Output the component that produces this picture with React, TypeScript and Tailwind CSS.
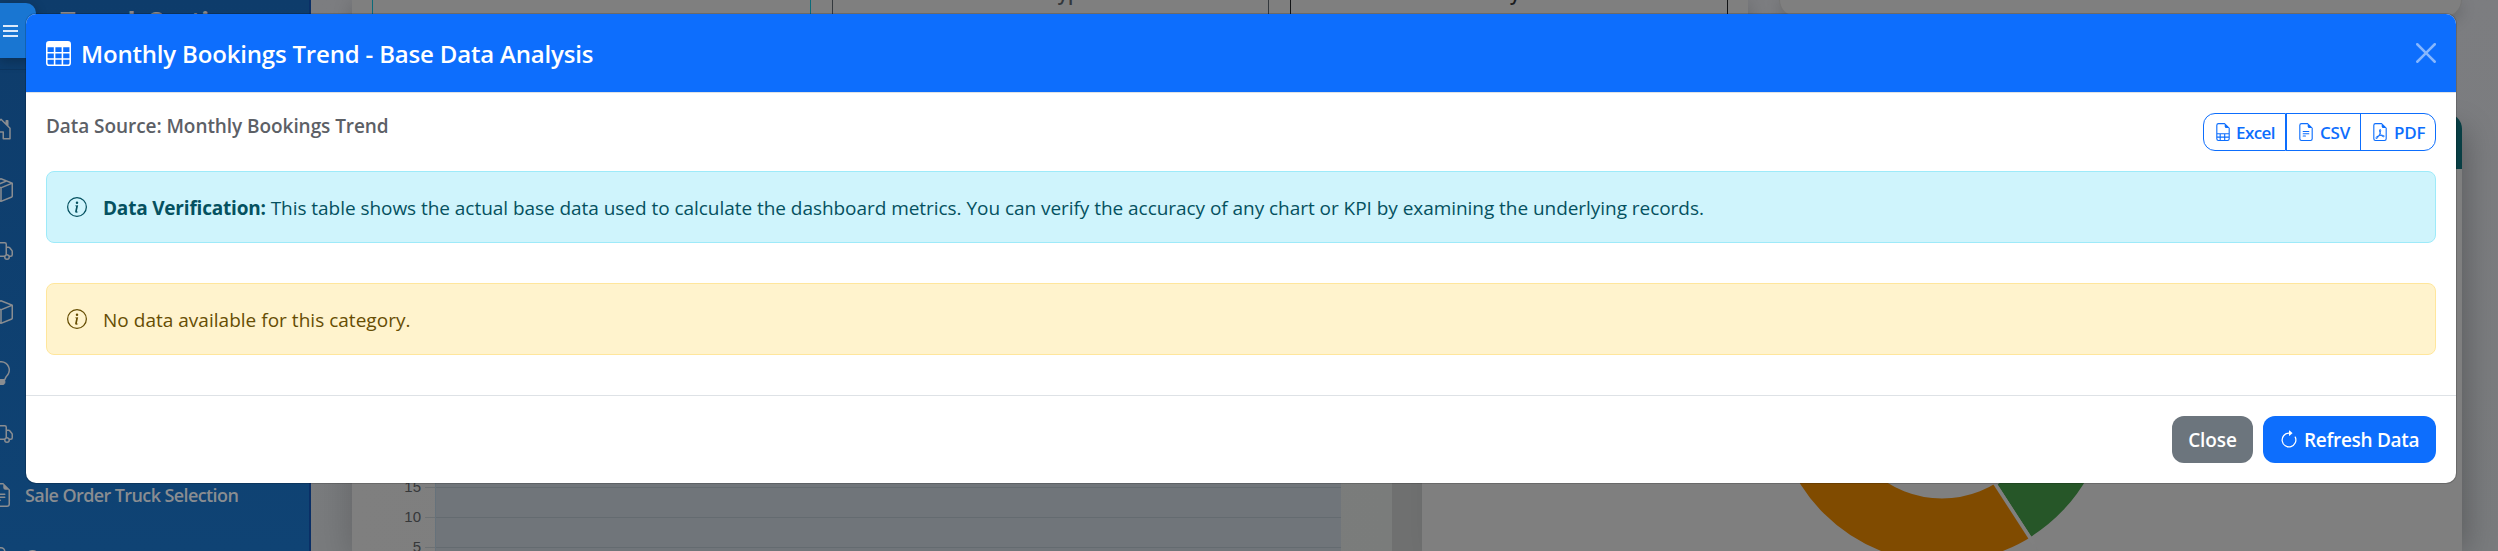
import React from "react";
import {
  BsArrowClockwise,
  BsBox,
  BsBoxSeam,
  BsFileEarmarkPdf,
  BsFileEarmarkSpreadsheet,
  BsFileEarmarkText,
  BsHouseDoor,
  BsInfoCircle,
  BsLightbulb,
  BsPerson,
  BsTable,
  BsTruck,
} from "react-icons/bs";

const menu = [
  { icon: BsHouseDoor, label: "" },
  { icon: BsBoxSeam, label: "" },
  { icon: BsTruck, label: "" },
  { icon: BsBox, label: "" },
  { icon: BsLightbulb, label: "" },
  { icon: BsTruck, label: "" },
  { icon: BsFileEarmarkText, label: "Sale Order Truck Selection" },
  { icon: BsPerson, label: "Customer" },
];

function Sidebar() {
  return (
    <aside className="relative flex h-full w-[311px] shrink-0 flex-col overflow-hidden border-r-2 border-[#0a2f66] bg-linear-to-b from-[#0e3c6b] to-[#0f4374] text-[#8a8d91]">
      <div className="h-[70px] shrink-0 border-b border-[#0c3560] pt-[2px] pl-[60px]">
        <div className="text-[27px] leading-[37px] font-bold tracking-[-0.8px] [word-spacing:7px] whitespace-nowrap text-[#87868a]">Trend Section</div>
      </div>
      <nav className="-ml-[11px] flex flex-col pt-[28px]">
        {menu.map(({ icon: Icon, label }, i) => (
          <div key={i} className="flex h-[61px] shrink-0 items-center gap-3">
            <Icon className="size-6 shrink-0" />
            {label && <span className="pt-[2px] text-[18px] font-semibold tracking-[-0.6px] whitespace-nowrap">{label}</span>}
          </div>
        ))}
      </nav>
      <div className="absolute top-[3px] left-0 flex h-[55px] w-9 flex-col gap-[3px] rounded-tr-[10px] bg-[#1976d2] pt-[22px] pl-[3px] shadow-[0_3px_12px_rgba(0,0,0,0.25)]">
        <div className="h-[2px] w-[15px] bg-[#dceafa]" />
        <div className="h-[2px] w-[15px] bg-[#dceafa]" />
        <div className="h-[2px] w-[15px] bg-[#dceafa]" />
      </div>
    </aside>
  );
}

function TopCards() {
  return (
    <div className="flex h-[113px] items-start">
      <div className="flex h-full w-[1396px] gap-[21px] rounded-b-2xl bg-[#7f7f7f] pl-5 shadow-[0_4px_20px_rgba(0,0,0,0.2)]">
        <div className="h-full w-[439px] border-x border-[#0a6b7a]" />
        <div className="h-full w-[437px] border-x border-[#33383d] pl-[214px]">
          <div className="-mt-[19px] text-[19px] leading-6 font-semibold text-[#33373b]">Type</div>
        </div>
        <div className="h-full w-[438px] border-x border-[#111315] pl-[183px]">
          <div className="-mt-[19px] text-[19px] leading-6 font-semibold text-[#1b1c1e]">Body</div>
        </div>
      </div>
      <div className="ml-[31px] h-[17px] w-[683px] rounded-b-[20px] border border-t-0 border-[#747474] bg-[#7f7f7f] shadow-[0_4px_16px_rgba(0,0,0,0.2)]" />
    </div>
  );
}

function LineChart() {
  return (
    <div className="flex h-full w-[1040px] flex-col justify-end bg-linear-to-r from-[#7f7f7f] to-[#7a7c7b]">
      <div className="flex h-[79px]">
        <div className="w-[69px] text-right font-['Liberation_Sans',sans-serif] text-[15px] leading-[30px] text-[#36383a]">
          <div>15</div>
          <div>10</div>
          <div>5</div>
        </div>
        <div className="ml-[4px] w-[10px]">
          <div className="h-[16px] border-b border-[#6d7173]" />
          <div className="h-[30px] border-b border-[#6d7173]" />
          <div className="h-[30px] border-b border-[#6d7173]" />
        </div>
        <div className="w-[906px] border-l border-[#66727b] bg-[#70757a]">
          <div className="h-[16px] border-b border-[#646b70]" />
          <div className="h-[30px] border-b border-[#646b70]" />
          <div className="h-[30px] border-b border-[#646b70]" />
        </div>
      </div>
    </div>
  );
}

function DonutChart() {
  return (
    <div className="flex h-full w-[1040px] flex-col rounded-t-[16px] bg-[#7f7f7f]">
      <div className="h-[56px] rounded-t-[16px] bg-[#083e44]" />
      <svg className="h-[382px] w-[1040px]" viewBox="1422 169 1040 382">
        <circle cx="1942" cy="395.5" r="135" fill="none" stroke="#804b00" strokeWidth="64" />
        <path d="M1942 395.5 L2046 564 L2140 564 L2140 395.5 Z" fill="#7f7f7f" />
        <path d="M1997.5 484.5 L2031.2 536.5 A167 167 0 0 0 2109 395.5 L2045 395.5 A103 103 0 0 1 1997.5 484.5 Z" fill="#265628" />
        <path d="M1990 476 L2034 544" stroke="#808080" strokeWidth="3.5" />
      </svg>
    </div>
  );
}

function ExportButton({ icon: Icon, children, className }: { icon: React.ElementType; children: string; className: string }) {
  return (
    <button className={"flex h-[38px] items-center border border-[#0d6efd] text-[17px] font-semibold text-[#0d6efd] " + className}>
      <Icon className="size-[18px] shrink-0" />
      <span className="pt-[2px]">{children}</span>
    </button>
  );
}

function Modal() {
  return (
    <section className="absolute top-[14px] left-[26px] flex h-[469px] w-[2430px] flex-col overflow-hidden rounded-[10px] bg-white shadow-[0_0_0_1px_rgba(0,0,0,0.17)]">
      <header className="flex h-[79px] shrink-0 items-center justify-between border-b border-[#dee2e6] bg-[#0d6efd] bg-clip-padding px-5 text-white">
        <div className="flex items-center gap-[10px]">
          <BsTable className="size-[25px]" />
          <h1 className="pt-px text-[24px] leading-[36px] font-semibold tracking-[-0.18px]">Monthly Bookings Trend - Base Data Analysis</h1>
        </div>
        <svg className="size-5 opacity-50" viewBox="0 0 16 16" fill="currentColor">
          <path d="M.293.293a1 1 0 0 1 1.414 0L8 6.586 14.293.293a1 1 0 1 1 1.414 1.414L9.414 8l6.293 6.293a1 1 0 0 1-1.414 1.414L8 9.414l-6.293 6.293a1 1 0 0 1-1.414-1.414L6.586 8 .293 1.707a1 1 0 0 1 0-1.414z" />
        </svg>
      </header>
      <div className="flex h-[302px] shrink-0 flex-col p-5">
        <div className="flex h-[38px] items-start justify-between">
          <h2 className="pt-px text-[19px] leading-6 font-semibold tracking-[-0.065px] text-[#5c6066]">Data Source: Monthly Bookings Trend</h2>
          <div className="flex">
            <ExportButton icon={BsFileEarmarkSpreadsheet} className="w-[83px] gap-[4px] rounded-l-[12px] pl-[10px] tracking-[-0.6px]">Excel</ExportButton>
            <ExportButton icon={BsFileEarmarkText} className="w-[75px] gap-[5px] pl-[10px] tracking-[-0.2px]">CSV</ExportButton>
            <ExportButton icon={BsFileEarmarkPdf} className="-ml-px w-[76px] gap-[5px] rounded-r-[12px] pl-[10px] tracking-[-0.2px]">PDF</ExportButton>
          </div>
        </div>
        <div className="mt-5 flex h-[72px] items-center gap-4 rounded-lg border border-[#9eeaf9] bg-[#cff4fc] px-5 text-[#055160]">
          <BsInfoCircle className="size-5 shrink-0" />
          <p className="pt-[2px] text-[19px] leading-[30px] whitespace-nowrap">
            <strong className="font-bold tracking-[-0.2px]">Data Verification:</strong>{" "}
            <span className="tracking-[-0.045px]">This table shows the actual base data used to calculate the dashboard metrics. You can verify the accuracy of any chart or KPI by examining the underlying records.</span>
          </p>
        </div>
        <div className="mt-10 flex h-[72px] items-center gap-4 rounded-lg border border-[#ffe69c] bg-[#fff3cd] px-5 text-[#664d03]">
          <BsInfoCircle className="size-5 shrink-0" />
          <p className="pt-[2px] text-[19px] leading-[30px] tracking-[0.02px]">No data available for this category.</p>
        </div>
      </div>
      <footer className="flex h-[88px] items-center justify-end gap-[10px] border-t border-[#dee2e6] px-5 text-[19px] font-semibold text-white">
        <button className="h-[47px] w-[81px] rounded-[12px] bg-[#6c757d] pt-[2px] tracking-[-0.1px]">Close</button>
        <button className="flex h-[47px] w-[173px] items-center gap-[5px] rounded-[12px] bg-[#0d6efd] pl-[16px] tracking-[-0.3px] whitespace-nowrap">
          <BsArrowClockwise className="size-5 shrink-0" />
          <span className="pt-[2px]">Refresh Data</span>
        </button>
      </footer>
    </section>
  );
}

export default function App() {
  return (
    <div className="relative flex h-[551px] w-[2498px] overflow-hidden bg-[#7b7c7d] font-['Open_Sans','Noto_Sans',sans-serif]">
      <Sidebar />
      <main className="flex h-full flex-1 flex-col bg-linear-to-b from-[#7c7d80] to-[#797b7d] pl-[41px]">
        <TopCards />
        <div className="flex h-[438px]">
          <div className="h-full shadow-[0_8px_35px_rgba(0,0,0,0.2)]">
            <LineChart />
          </div>
          <div className="relative h-full w-[30px] bg-[#6f7070]" />
          <div className="relative h-full rounded-t-[16px] shadow-[12px_8px_30px_-8px_rgba(0,0,0,0.25)]">
            <DonutChart />
          </div>
        </div>
      </main>
      <Modal />
    </div>
  );
}
